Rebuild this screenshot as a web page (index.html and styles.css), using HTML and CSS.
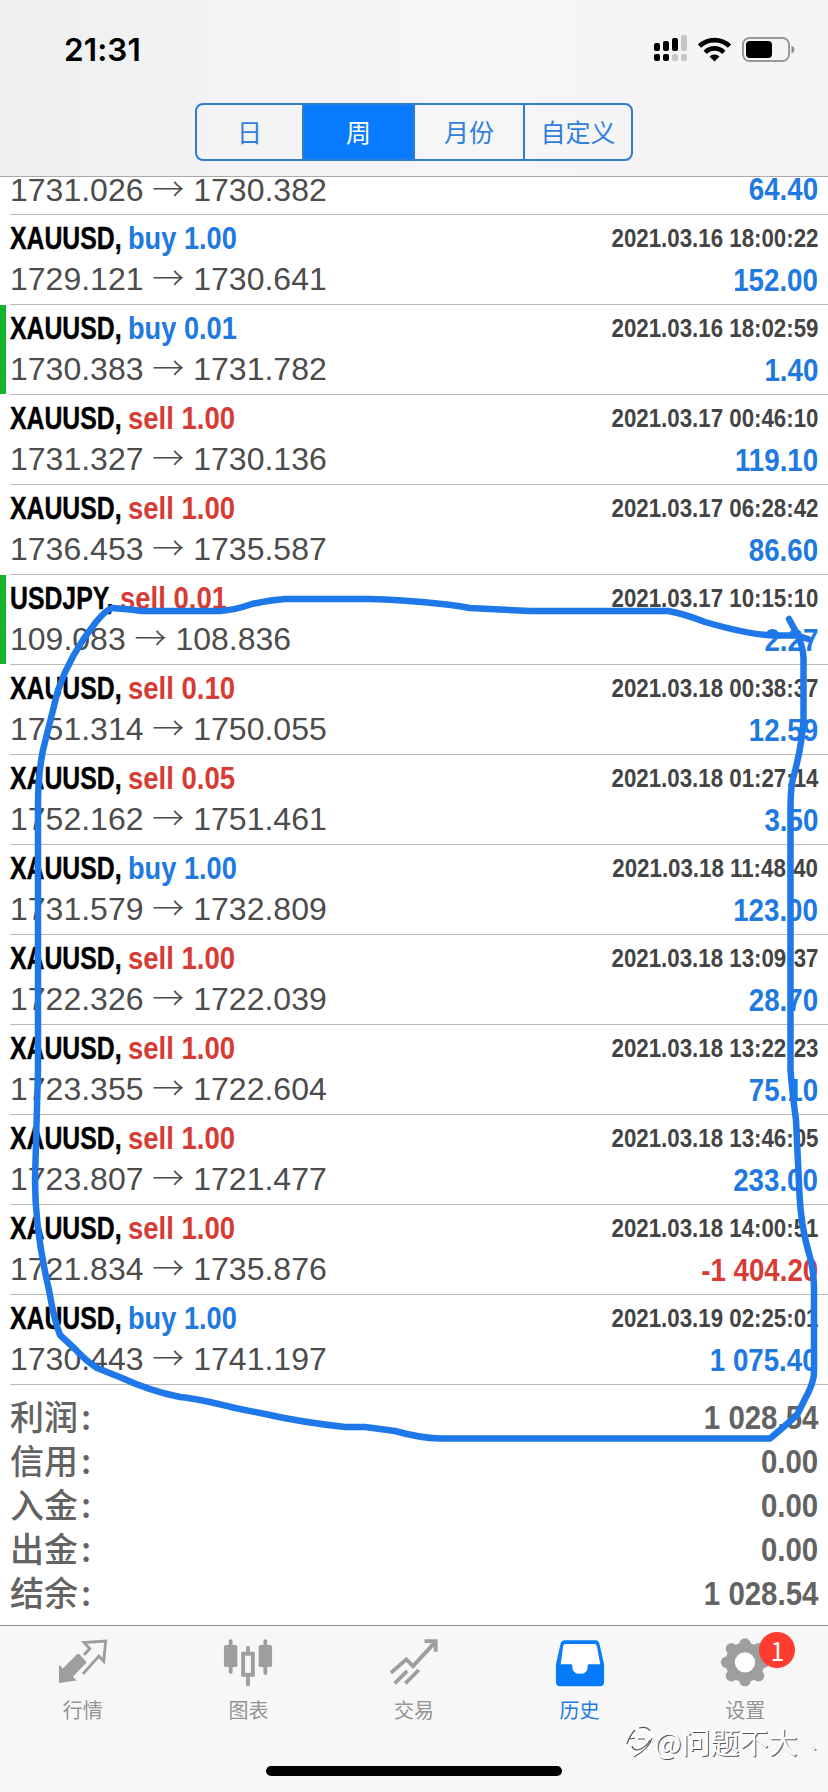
FILE: index.html
```html
<!DOCTYPE html>
<html lang="zh">
<head>
<meta charset="utf-8">
<title>历史</title>
<link rel="stylesheet" href="styles.css">
</head>
<body>
<div class="screen">
  <header class="header">
    <div class="status">
      <span class="clock">21:31</span>
      <svg class="status-icons" width="144" height="30" viewBox="0 0 144 30">
        <g fill="#000"><rect x="1" y="8" width="6" height="8" rx="2"/><rect x="10" y="6" width="6" height="10" rx="2"/><rect x="19" y="3" width="6" height="13" rx="2"/><rect x="1" y="19" width="6" height="7" rx="2"/><rect x="10" y="19" width="6" height="7" rx="2"/></g>
        <g fill="#c6c6c6"><rect x="28" y="0" width="6" height="16" rx="2"/><rect x="19" y="19" width="6" height="7" rx="2"/><rect x="28" y="19" width="6" height="7" rx="2"/></g>
        <g fill="none" stroke="#000" stroke-width="4.6"><path d="M46.5 11.2a21.5 21.5 0 0 1 30 0"/><path d="M52.2 17.3a13 13 0 0 1 18.600 0"/></g>
        <path d="M56.500 21.500a7 7 0 0 1 10 0L61.500 26.500z" fill="#000"/>
        <rect x="90" y="3" width="46" height="23" rx="6.500" fill="none" stroke="#999" stroke-width="2"/>
        <rect x="93" y="6" width="26" height="17" rx="4" fill="#000"/>
        <path d="M138.500 10.500q3 1.500 3 4t-3 4z" fill="#8c8c8c"/>
      </svg>
    </div>
    <nav class="segments">
      <span class="segment">日</span><span class="segment on">周</span><span class="segment">月份</span><span class="segment">自定义</span>
    </nav>
  </header>

  <main class="list">
    <div class="row cut"><div class="line"><span class="price">1731.026 <i class="arrow">→</i> 1730.382</span><b class="value">64.40</b></div></div>
    <div class="row"><div class="line top"><b class="deal"><span class="symbol">XAUUSD,</span><span class="side buy">buy 1.00</span></b><b class="date">2021.03.16 18:00:22</b></div><div class="line"><span class="price">1729.121 <i class="arrow">→</i> 1730.641</span><b class="value">152.00</b></div></div>
    <div class="row flag"><div class="line top"><b class="deal"><span class="symbol">XAUUSD,</span><span class="side buy">buy 0.01</span></b><b class="date">2021.03.16 18:02:59</b></div><div class="line"><span class="price">1730.383 <i class="arrow">→</i> 1731.782</span><b class="value">1.40</b></div></div>
    <div class="row"><div class="line top"><b class="deal"><span class="symbol">XAUUSD,</span><span class="side sell">sell 1.00</span></b><b class="date">2021.03.17 00:46:10</b></div><div class="line"><span class="price">1731.327 <i class="arrow">→</i> 1730.136</span><b class="value">119.10</b></div></div>
    <div class="row"><div class="line top"><b class="deal"><span class="symbol">XAUUSD,</span><span class="side sell">sell 1.00</span></b><b class="date">2021.03.17 06:28:42</b></div><div class="line"><span class="price">1736.453 <i class="arrow">→</i> 1735.587</span><b class="value">86.60</b></div></div>
    <div class="row flag"><div class="line top"><b class="deal"><span class="symbol jpy">USDJPY,</span><span class="side sell">sell 0.01</span></b><b class="date">2021.03.17 10:15:10</b></div><div class="line"><span class="price">109.083 <i class="arrow">→</i> 108.836</span><b class="value">2.27</b></div></div>
    <div class="row"><div class="line top"><b class="deal"><span class="symbol">XAUUSD,</span><span class="side sell">sell 0.10</span></b><b class="date">2021.03.18 00:38:37</b></div><div class="line"><span class="price">1751.314 <i class="arrow">→</i> 1750.055</span><b class="value">12.59</b></div></div>
    <div class="row"><div class="line top"><b class="deal"><span class="symbol">XAUUSD,</span><span class="side sell">sell 0.05</span></b><b class="date">2021.03.18 01:27:14</b></div><div class="line"><span class="price">1752.162 <i class="arrow">→</i> 1751.461</span><b class="value">3.50</b></div></div>
    <div class="row"><div class="line top"><b class="deal"><span class="symbol">XAUUSD,</span><span class="side buy">buy 1.00</span></b><b class="date">2021.03.18 11:48:40</b></div><div class="line"><span class="price">1731.579 <i class="arrow">→</i> 1732.809</span><b class="value">123.00</b></div></div>
    <div class="row"><div class="line top"><b class="deal"><span class="symbol">XAUUSD,</span><span class="side sell">sell 1.00</span></b><b class="date">2021.03.18 13:09:37</b></div><div class="line"><span class="price">1722.326 <i class="arrow">→</i> 1722.039</span><b class="value">28.70</b></div></div>
    <div class="row"><div class="line top"><b class="deal"><span class="symbol">XAUUSD,</span><span class="side sell">sell 1.00</span></b><b class="date">2021.03.18 13:22:23</b></div><div class="line"><span class="price">1723.355 <i class="arrow">→</i> 1722.604</span><b class="value">75.10</b></div></div>
    <div class="row"><div class="line top"><b class="deal"><span class="symbol">XAUUSD,</span><span class="side sell">sell 1.00</span></b><b class="date">2021.03.18 13:46:05</b></div><div class="line"><span class="price">1723.807 <i class="arrow">→</i> 1721.477</span><b class="value">233.00</b></div></div>
    <div class="row"><div class="line top"><b class="deal"><span class="symbol">XAUUSD,</span><span class="side sell">sell 1.00</span></b><b class="date">2021.03.18 14:00:51</b></div><div class="line"><span class="price">1721.834 <i class="arrow">→</i> 1735.876</span><b class="value loss">-1 404.20</b></div></div>
    <div class="row"><div class="line top"><b class="deal"><span class="symbol">XAUUSD,</span><span class="side buy">buy 1.00</span></b><b class="date">2021.03.19 02:25:01</b></div><div class="line"><span class="price">1730.443 <i class="arrow">→</i> 1741.197</span><b class="value">1 075.40</b></div></div>
    <section class="totals">
      <div class="total"><span class="name">利润<i class="colon">:</i></span><b class="sum">1 028.54</b></div>
      <div class="total"><span class="name">信用<i class="colon">:</i></span><b class="sum">0.00</b></div>
      <div class="total"><span class="name">入金<i class="colon">:</i></span><b class="sum">0.00</b></div>
      <div class="total"><span class="name">出金<i class="colon">:</i></span><b class="sum">0.00</b></div>
      <div class="total"><span class="name">结余<i class="colon">:</i></span><b class="sum">1 028.54</b></div>
    </section>
  </main>

  <footer class="tabs">
    <div class="tab">
      <svg width="54" height="54" viewBox="0 0 54 54"><path d="M2 21.500L6 25.500 21 10.500q1-1 2 0L30 18q1 1 0 2L16.500 34l4 4L2 40.500z" fill="#9e9e9e"/><path d="M28 11.500L34 5l-6-6.500L50.500-3 48.500 18 43.500 12.500 27 31" fill="none" stroke="#9e9e9e" stroke-width="3"/></svg>
      <span>行情</span>
    </div>
    <div class="tab">
      <svg width="54" height="54" viewBox="0 0 54 54"><g fill="#9e9e9e"><rect x="2" y="1" width="14" height="23" rx="2"/><rect x="38" y="1" width="14" height="23" rx="2"/><rect x="7" y="-5" width="4" height="36" rx="2"/><rect x="43" y="-5" width="4" height="37" rx="2"/><rect x="25" y="2" width="4" height="10" rx="2"/><rect x="25" y="32" width="4" height="12" rx="2"/></g><rect x="22" y="10" width="10" height="22" fill="none" stroke="#9e9e9e" stroke-width="4"/></svg>
      <span>图表</span>
    </div>
    <div class="tab">
      <svg width="54" height="54" viewBox="0 0 54 54"><g fill="none" stroke="#9e9e9e" stroke-width="4"><path d="M3 30L19 16l7 7L49-2M38-3h11.500V8"/><path d="M7 41L20 28M18 41L32 27"/></g></svg>
      <span>交易</span>
    </div>
    <div class="tab on">
      <svg width="54" height="54" viewBox="0 0 54 54"><path d="M11-4H43q3 0 4 3l5 22V39q0 5-4 5H6q-4 0-4-5V21L7-1q1-3 4-3z" fill="#087bfb"/><path d="M12 0H42q2 0 2.500 2L48 21H36q-1 0-1 2 0 8-8 8t-8-8q0-2-1-2H7L9.500 2Q10 0 12 0z" fill="#fff"/></svg>
      <span>历史</span>
    </div>
    <div class="tab">
      <svg width="54" height="54" viewBox="0 0 54 54"><g fill="#9e9e9e"><circle cx="27" cy="19" r="20.500"/><circle cx="27" cy="0" r="6"/><circle cx="27" cy="38" r="6"/><circle cx="8" cy="19" r="6"/><circle cx="46" cy="19" r="6"/><circle cx="13" cy="5" r="6"/><circle cx="41" cy="5" r="6"/><circle cx="13" cy="33" r="6"/><circle cx="41" cy="33" r="6"/></g><circle cx="27" cy="19" r="10.500" fill="#fff"/></svg>
      <span>设置</span>
      <em class="badge">1</em>
    </div>
  </footer>
  <div class="home"></div>

  <div class="mark">
    <svg width="28" height="34" viewBox="0 0 28 34"><path d="M3 19Q7 5 16 5q9 1 9 9 0 9-15 17l2-6M7 14h11" fill="none" stroke="#fff" stroke-width="4"/><path d="M1 20Q4 11 9 6M13 4q8-2 11 3M4 15l5-1M12 15h7M26 14q-2 10-18 19M6 22q1 4 6 4 9-3 12-10" fill="none" stroke="#555" stroke-width="1.200"/></svg>
    <span>@问题不大</span><span class="tick">、</span>
  </div>
  <svg class="pen" width="828" height="1792" viewBox="0 0 828 1792"><path d="M789 619L796 632Q803 645 803.500 658V720Q802 745 794 775 790.500 785 790.500 810V1070Q792 1090 796 1120 798 1160 799.500 1195 801 1225 808 1250 814 1268 814 1290V1372Q814 1380 809 1391L797 1415Q785 1426 770 1438.500H440Q420 1438 395 1431L365 1427H345Q300 1422 265 1414L235 1408Q200 1399 180 1397 150 1391 122 1378L97 1368Q85 1360 75 1349L60 1335Q54 1320 49 1290 35 1230 35 1180L38 1070V805Q38 775 43 750L58 690Q70 655 96 622 106 610 112 608 128 609 142 611H220Q235 610 252 604 270 600 285 599H370Q430 601 470 608L530 611H668Q685 614 705 622 750 635 775 635.500H797L808 639" fill="none" stroke="#1e78e9" stroke-width="6.500" stroke-linecap="round" stroke-linejoin="round"/></svg>
</div>
</body>
</html>
```
FILE: styles.css
```css
body { margin: 0; background: #fff; }
.screen {
  position: relative;
  width: 828px; height: 1792px;
  overflow: hidden;
  display: flex; flex-direction: column;
  font-family: "Liberation Sans", "Noto Sans CJK SC", sans-serif;
}
.header {
  box-sizing: border-box; height: 177px; flex: none;
  border-bottom: 1px solid #a9a9aa;
  background: linear-gradient(90deg, #efefef 0, #f2f3f5 25%, #f6f6f6 55%, #f5f4f5 100%);
  display: flex; flex-direction: column; align-items: center;
}
.status { width: 828px; height: 103px; display: flex; justify-content: space-between; box-sizing: border-box; padding: 32px 31px 0 64px; }
.clock { font: 600 31.5px/36px Inter, sans-serif; letter-spacing: 0.1px; }
.status-icons { margin-top: 3px; }
.segments {
  box-sizing: border-box; width: 438px; height: 58px;
  display: grid; grid-template-columns: 107px 111px 110px 1fr;
  border: 2px solid #2f7cd0; border-radius: 8px; overflow: hidden;
}
.segment {
  font: 25px/52px "Noto Sans CJK SC", sans-serif; color: #2f7fdc; text-align: center;
  border-right: 2px solid #2f7cd0;
}
.segment:last-child { border-right: 0; }
.segment.on { background: #087bff; color: #fff; }
.list { flex: 1; overflow: hidden; }
.row {
  height: 90px; box-sizing: border-box; margin-left: 10px; padding: 13px 10px 0 0;
  border-bottom: 1px solid #b9b9b9;
}
.row.flag { margin-left: 0; padding-left: 10px; border-bottom: 0; background: linear-gradient(#15b32c, #15b32c) 0 0 / 6px 89px no-repeat, linear-gradient(#b9b9b9, #b9b9b9) 10px 89px / 818px 1px no-repeat; }
.row.cut { height: 38px; padding-top: 0; }
.line { display: flex; justify-content: space-between; height: 41px; line-height: 41px; white-space: pre; }
.line.top { height: 31px; line-height: 20px; }
.row.cut .line { height: 24px; line-height: 24px; }
.row.cut .value { padding-top: 0; }

/* Helvetica condensed bold look: horizontally squeezed sans */
.deal { display: flex; font-size: 32px; color: #000; }
.symbol, .side, .date, .value, .sum { display: block; }
.symbol { width: 118px; transform: scaleX(.775); transform-origin: 0 0; -webkit-text-stroke: .4px #000; }
.symbol.jpy { width: 110px; }
.side { transform: scaleX(.85); transform-origin: 0 0; }
.side.sell { transform: scaleX(.86); }
.buy { color: #2079e0; }
.sell { color: #d63c35; }
.date { font-size: 26px; line-height: 20px; color: #444; transform: scaleX(.857); transform-origin: 100% 0; }
.price { font-size: 32px; color: #4c4c4c; }
.arrow { display: inline-block; width: 32px; font: normal 300 32px/20px "Noto Sans CJK SC", sans-serif; }
.value { font-size: 32px; padding-top: 1px; color: #2079e0; transform: scaleX(.865); transform-origin: 100% 0; }
.value.loss { color: #d63c35; }
.totals { padding: 10px 10px 0 10px; }
.total { display: flex; justify-content: space-between; height: 44px; line-height: 44px; font-size: 34px; color: #636363; }
.sum { transform: scaleX(.865); transform-origin: 100% 0; }
.name { line-height: 42px; font-family: "Noto Sans CJK SC", sans-serif; font-weight: 500; }
.colon { font-style: normal; margin-left: 3px; }
.tabs {
  box-sizing: border-box; height: 167px; flex: none; border-top: 1px solid #8c8c8c; background: #f7f7f7;
  display: grid; grid-template-columns: repeat(5, 1fr);
}
.tab { position: relative; display: flex; flex-direction: column; align-items: center; padding-top: 18px; font: 20px/28px "Noto Sans CJK SC", sans-serif; color: #939393; }
.tab svg { overflow: visible; height: 52px; }
.tab.on { color: #1f7ae0; }
.badge { position: absolute; left: 97px; top: 6px; width: 36px; height: 36px; border-radius: 50%; background: #fc3d30; color: #fff; font: normal 25px/36px "Noto Sans CJK SC", sans-serif; text-align: center; }
.home { position: absolute; left: 266px; top: 1766px; width: 296px; height: 10px; border-radius: 5px; background: #000; }
.mark { position: absolute; left: 626px; top: 1723px; display: flex; align-items: center; white-space: nowrap; font: 29px/36px "Noto Sans CJK SC", sans-serif; color: #fff; text-shadow: 1px 1px 0 #555; }
.tick { margin-left: 12px; font-size: 18px; }
.pen { position: absolute; left: 0; top: 0; }
```
